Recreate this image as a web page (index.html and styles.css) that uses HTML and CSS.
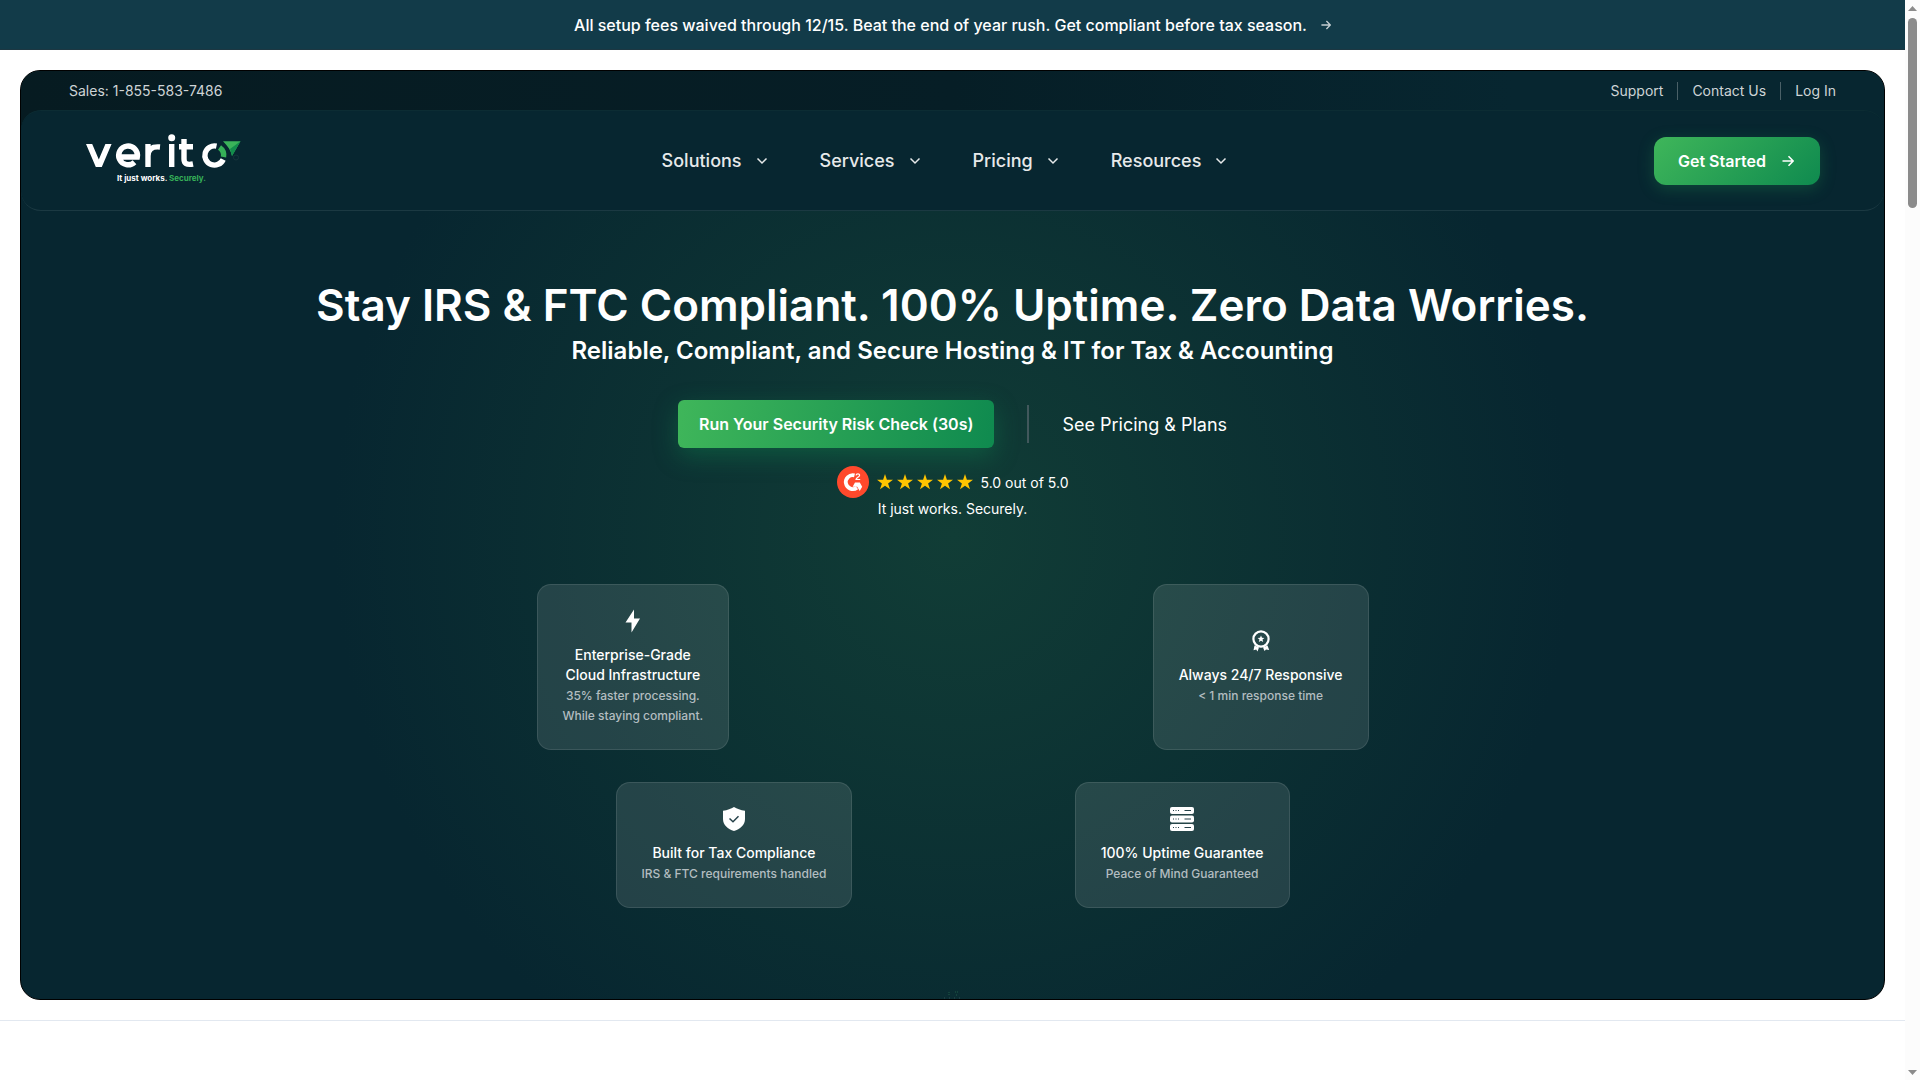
FILE: index.html
```html
<!DOCTYPE html>
<html lang="en">
<head>
<meta charset="utf-8">
<meta name="viewport" content="width=device-width, initial-scale=1">
<title>Verito | Secure Hosting &amp; IT for Tax &amp; Accounting</title>
<link rel="stylesheet" href="styles.css">
</head>
<body>
<svg class="sprite" aria-hidden="true">
  <symbol id="chevron" viewBox="0 0 12 12"><path d="M1.5 3.500 6 8l4.500-4.500" fill="none" stroke="currentColor" stroke-width="1.500"/></symbol>
  <symbol id="arrow" viewBox="0 0 12 12"><path d="M.5 6h10.500M6.500 1.200 11.200 6 6.500 10.800" fill="none" stroke="currentColor" stroke-width="1.600"/></symbol>
  <symbol id="star" viewBox="0 0 20 20"><path d="M10 2l1.900 5.800H18l-4.900 3.600 1.900 5.900-5-3.600-5 3.600 1.900-5.900L2 7.800h6.100z" fill="#ffc400"/></symbol>
</svg>
<div class="window">
  <div class="page">
    <a class="promo" href="#">
      <span>All setup fees waived through 12/15. Beat the end of year rush. Get compliant before tax season.</span>
      <svg class="promo-arrow" aria-hidden="true"><use href="#arrow"/></svg>
    </a>
    <div class="shell">
      <div class="utility">
        <a href="tel:18555837486">Sales: 1-855-583-7486</a>
        <nav class="utility-links" aria-label="Account">
          <a href="#">Support</a>
          <a href="#">Contact Us</a>
          <a href="#">Log In</a>
        </nav>
      </div>
      <header class="navbar">
        <a class="logo" href="#" aria-label="Verito">
          <svg width="160" height="54" viewBox="0 0 160 54" aria-hidden="true">
            <path d="M1 10h6.200l6.600 15.500L20.400 10h6.200L16.800 33h-6z" fill="#fff"/>
            <g fill="none" stroke="#fff" stroke-width="5.400">
              <path d="M33.500 23h18.800A9.400 9.400 0 1 0 49.500 28.200"/>
              <path d="M63 33V10M63 22c0-6.500 3.500-9.800 12-9"/>
              <path d="M86.700 10v23M99 5v20c0 4.500 2.500 6.300 9 5M94 12.800h14"/>
              <path d="M131.500 12.100A9.600 9.600 0 1 0 138.200 25.500"/>
            </g>
            <circle cx="86.700" cy="3.800" r="3.500" fill="#fff"/>
            <path d="M134.500 13.500a9.600 9.600 0 0 1 4 9.500" fill="none" stroke="#36b058" stroke-width="5.400"/>
            <path d="M138 7.200h17.500L147 22c-1-5-4-10-9-14.800z" fill="#3bb35a"/>
            <path d="M155.500 7.200 147 22l-2-7z" fill="#128c4c"/>
            <circle cx="151" cy="23.500" r="2.500" fill="none" stroke="#16353c"/>
            <text class="logo-tag" x="32" y="47" fill="#fff">It just works. <tspan fill="#36b058">Securely.</tspan></text>
          </svg>
        </a>
        <nav class="menu" aria-label="Main">
          <button type="button">Solutions <svg aria-hidden="true"><use href="#chevron"/></svg></button>
          <button type="button">Services <svg aria-hidden="true"><use href="#chevron"/></svg></button>
          <button type="button">Pricing <svg aria-hidden="true"><use href="#chevron"/></svg></button>
          <button type="button">Resources <svg aria-hidden="true"><use href="#chevron"/></svg></button>
        </nav>
        <div class="navbar-end">
          <button class="get-started" type="button">Get Started <svg aria-hidden="true"><use href="#arrow"/></svg></button>
        </div>
      </header>
      <main class="hero">
        <h1>Stay IRS &amp; FTC Compliant. 100% Uptime. Zero Data Worries.</h1>
        <h2>Reliable, Compliant, and Secure Hosting &amp; IT for Tax &amp; Accounting</h2>
        <div class="actions">
          <button class="risk-check" type="button">Run Your Security Risk Check (30s)</button>
          <span class="divider"></span>
          <a href="#">See Pricing &amp; Plans</a>
        </div>
        <div class="rating">
          <svg class="g2" viewBox="0 0 32 32" role="img" aria-label="G2">
            <circle cx="16" cy="16" r="16" fill="#ff492c"/>
            <path d="M17.500 9.300A7 7 0 1 0 20 21.700" fill="none" stroke="#fff" stroke-width="3.800"/>
            <path d="M18 16.500h4.800l2.400 4.300-2.500 4.300-2.500-4.300h-4.600z" fill="#fff"/>
            <path d="M19 9.300c.3-2 3.700-2 3.600 0 0 1.700-3.300 2.200-3.600 4.200h4.200" fill="none" stroke="#fff" stroke-width="1.200"/>
          </svg>
          <span class="stars" role="img" aria-label="Five stars">
            <svg><use href="#star"/></svg><svg><use href="#star"/></svg><svg><use href="#star"/></svg><svg><use href="#star"/></svg><svg><use href="#star"/></svg>
          </span>
          <span>5.0 out of 5.0</span>
        </div>
        <p class="tagline">It just works. Securely.</p>
        <div class="features features-outer">
          <article class="card">
            <svg viewBox="0 0 24 24" aria-hidden="true"><path d="M13 .5 4.500 13.500h6L10.500 23.500 19 9.500h-6z" fill="#fff"/></svg>
            <h3>Enterprise-Grade<br>Cloud Infrastructure</h3>
            <p>35% faster processing.<br>While staying compliant.</p>
          </article>
          <article class="card">
            <svg viewBox="0 0 24 24" aria-hidden="true">
              <circle cx="12" cy="10" r="7.600" fill="none" stroke="#fff" stroke-width="2.200"/>
              <path d="M12 6.500l1 2.300 2.400.2-1.900 1.600.7 2.400-2.200-1.300-2.200 1.300.7-2.400L8.600 9l2.400-.2zM5.500 16.500l4.500 2-1.500 4-1.300-2-2.700.8zM18.500 16.500l-4.500 2 1.500 3.500 1.500-1.500 3.200.5z" fill="#fff"/>
            </svg>
            <h3>Always 24/7 Responsive</h3>
            <p>&lt; 1 min response time</p>
          </article>
        </div>
        <div class="features features-inner">
          <article class="card">
            <svg viewBox="0 0 24 24" aria-hidden="true">
              <path d="M12 0c3 2 6.500 3 11 3.800V12c0 6-5 10-11 12C6 22 1 18 1 12V3.800C5.500 3 9 2 12 0z" fill="#fff"/>
              <path d="M7.500 11.500l3.500 3.300 5.500-5.500" fill="none" stroke="#26424a" stroke-width="1.500"/>
            </svg>
            <h3>Built for Tax Compliance</h3>
            <p>IRS &amp; FTC requirements handled</p>
          </article>
          <article class="card">
            <svg viewBox="0 0 24 24" aria-hidden="true">
              <g fill="#fff"><rect width="24" height="7" rx="2"/><rect y="8.500" width="24" height="7" rx="2"/><rect y="17" width="24" height="7" rx="2"/></g>
              <g stroke="#26424a" fill="none">
                <path d="M14.500 3.500h6.500M14.500 12h6.500M14.500 20.500h6.500"/>
                <path d="M3 3.500h7M3 12h7M3 20.500h7" stroke-dasharray="1 1.500"/>
              </g>
            </svg>
            <h3>100% Uptime Guarantee</h3>
            <p>Peace of Mind Guaranteed</p>
          </article>
        </div>
        <svg class="scroll-hint" viewBox="0 0 18 8" aria-hidden="true">
          <path d="M5 1v4M11 1h3M12 4h2" fill="none" stroke="#1f5a46" stroke-dasharray="1 1"/>
          <path d="M0 7h17" fill="none" stroke="#2c4f54" stroke-dasharray="1 4"/>
        </svg>
      </main>
    </div>
    <section class="next"></section>
  </div>
  <div class="scrollbar" aria-hidden="true">
    <svg viewBox="0 0 15 18"><path d="M3 11 7.500 6l4.500 5z" fill="#8b8b8b"/></svg>
    <span class="thumb"></span>
    <svg viewBox="0 0 15 18"><path d="M3 8h9l-4.500 5z" fill="#8b8b8b"/></svg>
  </div>
</div>
</body>
</html>
```
FILE: styles.css
```css
* { box-sizing: border-box; }
body {
  margin: 0;
  background: #fff;
  color: #fff;
  font-family: Inter, "Liberation Sans", sans-serif;
}
h1, h2, h3, p { margin: 0; }
a { color: inherit; text-decoration: none; }
button { border: 0; padding: 0; background: none; color: inherit; font: inherit; cursor: pointer; }
svg { display: block; }
.sprite { position: absolute; width: 0; height: 0; }

.window { display: grid; grid-template-columns: minmax(0, 1fr) 15px; min-height: 100vh; }

.promo {
  display: flex;
  align-items: center;
  justify-content: center;
  gap: 14px;
  height: 50px;
  border-bottom: 1px solid #1c3742;
  background: #123b49;
  font-size: 16px;
  font-weight: 500;
}
.promo-arrow { width: 10px; height: 10px; color: #c4ced2; }

.shell {
  margin: 20px;
  border: 1px solid #000;
  border-radius: 20px;
  overflow: hidden;
  background: radial-gradient(circle at center, #113d36 0, #072630 620px);
}
.utility {
  display: flex;
  align-items: center;
  justify-content: space-between;
  height: 60px;
  margin-bottom: -21px;
  padding: 0 48px 20px;
  background: linear-gradient(90deg, #061b21, #061e26 50%, #072630 80%);
  color: #ced4d6;
  font-size: 14px;
  line-height: 18px;
}
.utility-links { display: flex; align-items: center; }
.utility-links a + a { margin-left: 14px; padding-left: 14px; border-left: 1px solid #4a6067; }
.navbar {
  display: grid;
  grid-template-columns: 1fr auto 1fr;
  align-items: center;
  height: 101px;
  padding: 0 64px;
  border-top: 1px solid #0c2c33;
  border-bottom: 1px solid #1b3942;
  border-radius: 20px;
  background: #072630;
}
.menu { display: flex; gap: 52px; padding-right: 16px; color: #e6e9ea; font-size: 18px; font-weight: 500; }
.menu button { display: flex; align-items: center; gap: 14px; }
.menu svg { width: 12px; height: 12px; }
.logo-tag { font-family: Inter, sans-serif; font-size: 8px; font-weight: 700; }
.navbar-end { display: flex; justify-content: flex-end; }
.get-started {
  display: flex;
  align-items: center;
  gap: 16px;
  height: 48px;
  padding: 0 26px 0 24px;
  border-radius: 12px;
  background: linear-gradient(135deg, #3fb65a, #0f8a4f);
  box-shadow: 0 4px 16px rgba(30, 150, 80, .3);
  font-size: 16px;
  font-weight: 600;
}
.get-started svg { width: 12px; height: 12px; }

.hero {
  position: relative;
  display: flex;
  flex-direction: column;
  align-items: center;
  padding: 66px 20px 91px;
  text-align: center;
}
h1 { font-size: 44px; line-height: 56px; font-weight: 600; }
h2 { margin-top: 2px; font-size: 24px; line-height: 32px; font-weight: 600; }
.actions { display: flex; align-items: center; margin-top: 33px; font-size: 18px; }
.risk-check {
  height: 48px;
  padding: 0 21px;
  border-radius: 6px;
  background: linear-gradient(100deg, #3fb65a, #0f8a4f);
  box-shadow: 0 8px 24px rgba(15, 138, 79, .4);
  font-size: 16px;
  font-weight: 600;
}
.divider { width: 2px; height: 38px; margin: 0 33px; background: #41585c; }
.rating { display: flex; align-items: center; gap: 6px; margin-top: 18px; font-size: 14px; }
.g2 { width: 32px; height: 32px; }
.stars { display: flex; }
.stars svg { width: 20px; height: 20px; }
.tagline { margin-top: 1px; font-size: 14px; line-height: 20px; }

.features { display: flex; justify-content: space-between; }
.features-outer { width: 832px; margin-top: 65px; }
.features-inner { width: 674px; margin-top: 32px; }
.card {
  display: flex;
  flex-direction: column;
  align-items: center;
  justify-content: center;
  padding: 24px 25px 23px;
  border: 1px solid rgba(255, 255, 255, .1);
  border-radius: 14px;
  background: rgba(255, 255, 255, .11);
}
.card svg { width: 24px; height: 24px; margin-bottom: 12px; }
.card h3 { font-size: 14px; line-height: 20px; font-weight: 500; }
.card p { margin-top: 1px; color: #b3bdc0; font-size: 12px; line-height: 20px; font-weight: 500; }
.scroll-hint { position: absolute; bottom: 0; left: calc(50% - 9px); width: 18px; height: 8px; }

.next { border-top: 1px solid #e2e8f0; }

.scrollbar { display: flex; flex-direction: column; background: #fcfcfc; }
.scrollbar svg { width: 15px; height: 18px; }
.thumb { width: 9px; height: 190px; margin: 0 auto auto 3px; border-radius: 5px; background: #8b8b8b; }
```
